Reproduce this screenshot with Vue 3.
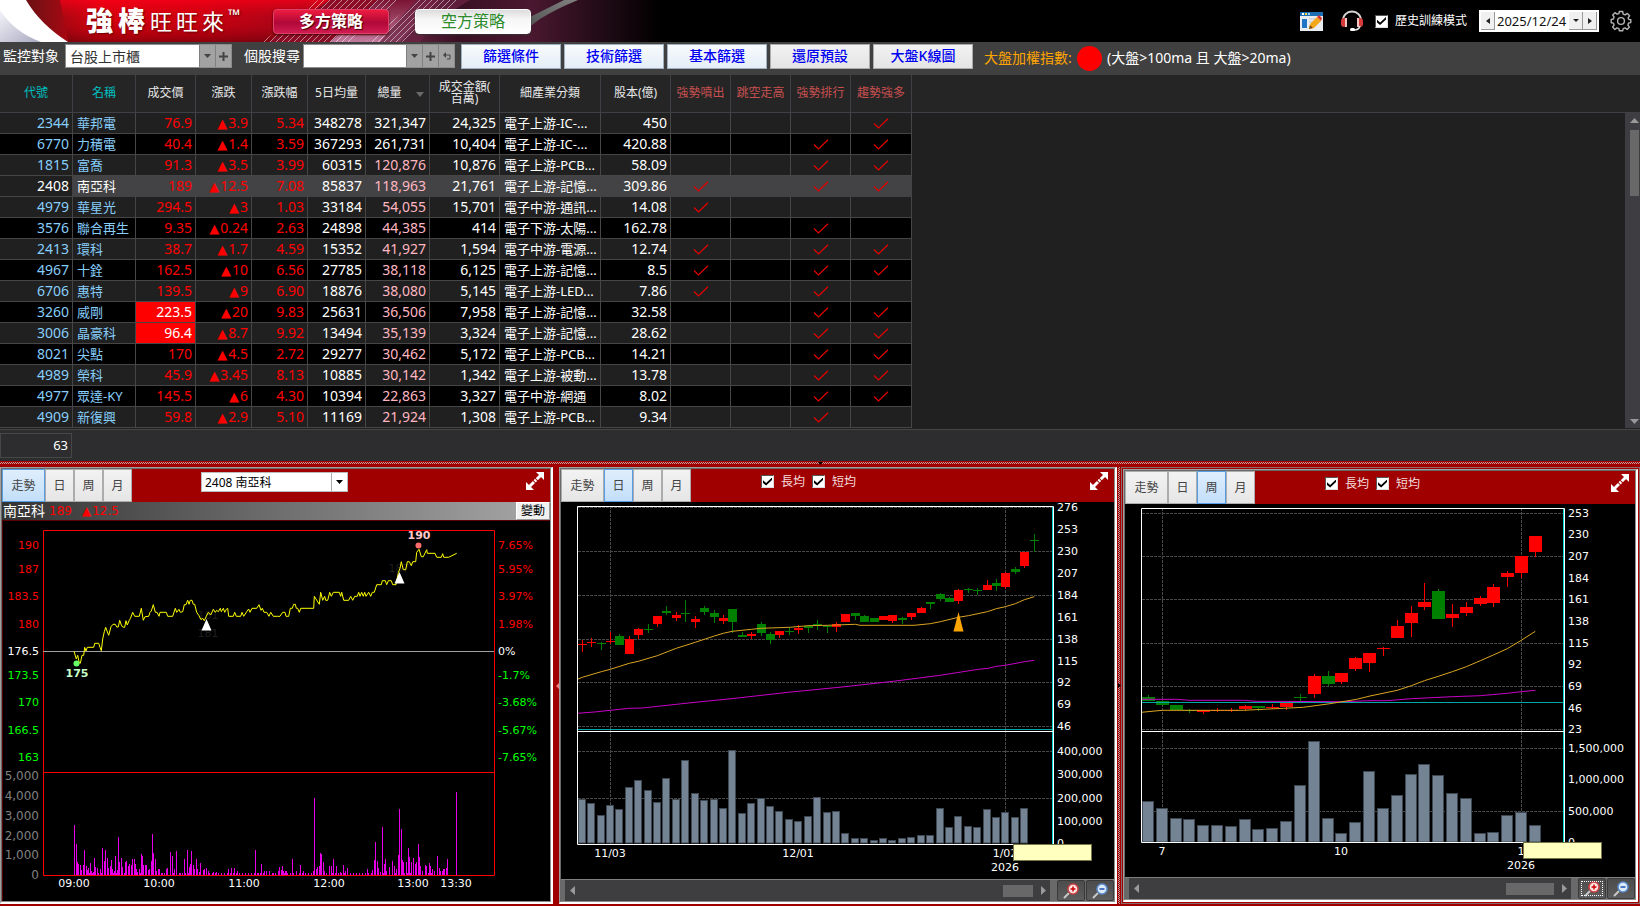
<script setup>
import { ref } from 'vue'

const columns = [
  { label: '代號', width: 73, tone: 'teal' },
  { label: '名稱', width: 63, tone: 'teal' },
  { label: '成交價', width: 60 },
  { label: '漲跌', width: 56 },
  { label: '漲跌幅', width: 56 },
  { label: '5日均量', width: 58 },
  { label: '總量', width: 64, sorted: true },
  { label: '成交金額( 百萬)', width: 70 },
  { label: '細產業分類', width: 101 },
  { label: '股本(億)', width: 70 },
  { label: '強勢噴出', width: 60, tone: 'rose' },
  { label: '跳空走高', width: 60, tone: 'rose' },
  { label: '強勢排行', width: 60, tone: 'rose' },
  { label: '趨勢強多', width: 61, tone: 'rose' },
]

// code, name, price, change, percent, 5-day volume, volume, amount, industry, capital, signals
const stocks = [
  ['2344', '華邦電', '76.9', '3.9', '5.34', '348278', '321,347', '24,325', '電子上游-IC-...', '450', '0001'],
  ['6770', '力積電', '40.4', '1.4', '3.59', '367293', '261,731', '10,404', '電子上游-IC-...', '420.88', '0011'],
  ['1815', '富喬', '91.3', '3.5', '3.99', '60315', '120,876', '10,876', '電子上游-PCB...', '58.09', '0011'],
  ['2408', '南亞科', '189', '12.5', '7.08', '85837', '118,963', '21,761', '電子上游-記憶...', '309.86', '1011'],
  ['4979', '華星光', '294.5', '3', '1.03', '33184', '54,055', '15,701', '電子中游-通訊...', '14.08', '1000'],
  ['3576', '聯合再生', '9.35', '0.24', '2.63', '24898', '44,385', '414', '電子下游-太陽...', '162.78', '0010'],
  ['2413', '環科', '38.7', '1.7', '4.59', '15352', '41,927', '1,594', '電子中游-電源...', '12.74', '1011'],
  ['4967', '十銓', '162.5', '10', '6.56', '27785', '38,118', '6,125', '電子上游-記憶...', '8.5', '1011'],
  ['6706', '惠特', '139.5', '9', '6.90', '18876', '38,080', '5,145', '電子上游-LED...', '7.86', '1010'],
  ['3260', '威剛', '223.5', '20', '9.83', '25631', '36,506', '7,958', '電子上游-記憶...', '32.58', '0011'],
  ['3006', '晶豪科', '96.4', '8.7', '9.92', '13494', '35,139', '3,324', '電子上游-記憶...', '28.62', '0011'],
  ['8021', '尖點', '170', '4.5', '2.72', '29277', '30,462', '5,172', '電子上游-PCB...', '14.21', '0011'],
  ['4989', '榮科', '45.9', '3.45', '8.13', '10885', '30,142', '1,342', '電子上游-被動...', '13.78', '0011'],
  ['4977', '眾達-KY', '145.5', '6', '4.30', '10394', '22,863', '3,327', '電子中游-網通', '8.02', '0011'],
  ['4909', '新復興', '59.8', '2.9', '5.10', '11169', '21,924', '1,308', '電子上游-PCB...', '9.34', '0010'],
]
const selected = ref('2408')
const limitUp = ['3260', '3006']

const tools = ['篩選條件', '技術篩選', '基本篩選', '還原預設', '大盤K線圖']
const tabs = ['走勢', '日', '周', '月']
const history = ref(true)

// Chart data is stored on a grid of three units per pixel.
const UNIT = 3
const cell = (n) => Math.floor(n / UNIT)
const nums = (text) => text.trim().split(/\s*;\s*/).map((r) => r.split(/[\s,]+/).map(Number))
const shift = (rows, dx) => rows.map(([x, ...rest]) => [x + dx, ...rest])
const line = (rows) => rows.map(([x, y]) => `${(x / UNIT).toFixed(1)},${(y / UNIT).toFixed(1)}`).join(' ')

/* ---- intraday ---- */
const tickLine = line([
  ...nums('222 589;229 612;233 601;238 624;241 625;246 601;251 601;254 577;258 588;262 577;281 577;284 565;296 565;300 577;304 587;308 552;313 530;317 517;321 528;326 541;333 515;339 508;346 508;350 516;355 516;359 496;364 510;368 516;374 517;378 497;382 510;387 497;391 491;398 472;404 484;418 484;424 460;430 496;435 485;446 484;450 472;454 468;460 449;466 472;471 472;477 484;480 472;499 472;503 484;518 484;526 460;530 472;537 463;541 472;548 470;553 449;558 449;563 436;567 448;571 436;576 436;580 448;584 448;590 472;597 482;603 494;608 490;613 497;619 484;625 472;632 480;640 463;646 472;650 466;655 470;661 460;664 470;670 460;674 472;679 463;683 460;686 484;700 484;704 472;709 484;722 484;726 472;731 484;740 470;746 462;750 472;756 460;770 460;777 449;783 466;787 460;792 472;800 472;807 484;812 472;820 484;832 484'),
  ...shift(nums('0 484;8 472;15 472;18 484;26 484;31 460;37 460;41 448;46 448;49 460;53 460;58 472;62 460;101 460;103 424;118 448;122 412;128 436;134 424;137 436;143 436;149 412;154 424;160 412;178 412;182 424;185 412;191 436;206 436;212 424;218 436;224 424;232 424;236 412;240 424;245 412;250 424;254 412;258 424;266 412;272 424;277 412;283 412;290 389;304 389;307 377;316 377;320 389;325 377;334 377;338 389;348 389;355 353;360 340;364 320;370 344;377 344;382 320;388 320;394 332;398 320;407 320;410 292;417 283;424 305;430 305;440 284;442 295;465 295;470 307;484 307;488 296;491 307;506 307;530 295'), 840),
])
const tickVolumes = [
  ...nums('223 1110;229 1168;232 1222;236 1228;241 1231;244 1246;250 1231;253 1186;259 1234;262 1246;265 1240;271 1225;274 1249;280 1252;283 1210;286 1237;292 1240;295 1255;301 1243;307 1180;313 1219;316 1186;322 1210;325 1240;331 1234;334 1216;337 1243;343 1249;346 1204;352 1246;355 1147;358 1222;364 1210;367 1237;373 1255;376 1222;379 1219;385 1234;388 1228;394 1231;397 1213;403 1213;406 1228;409 1244;412 1252;418 1243;424 1198;427 1204;430 1231;436 1231;439 1231;445 1246;448 1243;454 1219;457 1138;460 1195;466 1213;469 1249;475 1243;478 1243;487 1255;493 1255;499 1243;502 1240;511 1192;517 1204;523 1243;529 1189;541 1255;553 1213;562 1186;568 1237;571 1228;574 1189;580 1231;583 1243;589 1213;592 1243;598 1252;601 1225;610 1246;613 1243;619 1240;625 1250;640 1252;649 1252;685 1243;694 1240;703 1240;712 1250;766 1186;775 1255;784 1228;793 1250;799 1249;808 1249;820 1254;835 1250;838 1237;844 1246;847 1234;850 1249;859 1249;877 1213;890 1252'),
  ...shift(nums('4 1246;7 1234;16 1249;37 1213;50 1250;61 1231;69 1248;100 1250;103 1030;109 1243;112 1237;118 1234;121 1195;124 1198;130 1222;133 1249;148 1234;154 1234;160 1213;169 1234;181 1252;190 1231;196 1249;202 1240;211 1254;262 1243;277 1246;283 1216;286 1162;292 1219;295 1240;301 1252;307 1117;313 1228;316 1213;319 1249;328 1237;337 1219;343 1234;349 1243;355 1201;358 1063;364 1123;367 1216;370 1222;379 1222;385 1180;388 1207;394 1222;400 1210;406 1228;409 1222;415 1168;418 1207;421 1234;427 1248;436 1231;439 1234;448 1225;451 1234;457 1243;463 1250;472 1204;478 1240;481 1249;487 1249;490 1243;493 1243;499 1240;502 1213;529 1012'), 840),
  ...Array.from({ length: 143 }, (_, i) => [223 + i * 9, 1255]).filter(([x]) => x < 1345),
].map(([x, y]) => ({ x: cell(x), y: cell(y), h: 420 - cell(y) }))

const priceTicks = [
  ['190', '7.65%', 271, 'up'], ['187', '5.95%', 343, 'up'], ['183.5', '3.97%', 424, 'up'], ['180', '1.98%', 508, 'up'],
  ['176.5', '0%', 589, 'flat'],
  ['173.5', '-1.7%', 661, 'down'], ['170', '-3.68%', 742, 'down'], ['166.5', '-5.67%', 826, 'down'], ['163', '-7.65%', 907, 'down'],
].map(([price, pct, y, tone]) => ({ price, pct, y: cell(y), tone }))
const volumeTicks = [['5,000', 963], ['4,000', 1023], ['3,000', 1083], ['2,000', 1142], ['1,000', 1200], ['0', 1259]]
const timeTicks = [['09:00', 74], ['10:00', 159], ['11:00', 244], ['12:00', 329], ['13:00', 413], ['13:30', 456]]

/* ---- candles: x, high, top, bottom, low, rising ---- */
function buildChart(o) {
  return {
    ...o,
    candles: o.candles.map(([x, hi, top, bot, lo, up]) => ({
      x: cell(x), hi: cell(hi), h: cell(lo) - cell(hi), top: cell(top), bh: Math.max(1, cell(bot) - cell(top)), fill: up ? '#ff0000' : '#008000',
    })),
    bars: o.volumes.map(([x, y]) => ({ x: cell(x), y: cell(y), h: o.base - cell(y) })),
  }
}

const daily = buildChart({
  key: 'daily', active: '日', box: '6 47 553 377', left: 22, right: 499, top: 51, split: 276, teal: 274, base: 388, frameBottom: 389,
  half: 4, body: 9, barWidth: 8,
  grid: [157, 289, 421, 553, 682, 814, 889, 1030].map(cell), vert: [55, 450],
  labelX: 502,
  labels: [['276', 157], ['253', 223], ['230', 289], ['207', 355], ['184', 421], ['161', 487], ['138', 553], ['115', 619], ['92', 682], ['69', 748], ['46', 814], ['400,000', 889], ['300,000', 958], ['200,000', 1030], ['100,000', 1099], ['0', 1166]],
  dates: [['11/03', 55, 398], ['12/01', 243, 398], ['1/02', 450, 398], ['2026', 450, 412]],
  tip: { x: 458, y: 389, w: 79, h: 17 },
  candles: nums('82 555 567 570 591 1;109 549 561 564 576 1;139 561 564 567 585 0;166 531 558 561 567 1;193 537 543 570 570 0;223 543 552 598 598 1;250 519 522 540 552 1;280 507 522 525 534 0;307 483 483 507 516 1;334 453 468 474 480 0;364 471 480 489 498 1;391 435 474 477 501 0;421 483 492 501 519 1;448 453 459 471 480 0;478 465 474 486 504 0;505 480 489 498 507 1;532 462 462 501 534 0;562 531 540 546 546 0;589 531 537 543 552 1;619 501 507 534 543 0;646 532 537 555 567 0;673 528 528 540 549 1;703 516 528 531 540 0;730 510 519 525 537 1;760 510 513 519 534 0;787 495 508 511 525 0;817 510 513 516 534 0;844 501 508 516 531 1;871 477 477 501 501 1;901 474 474 483 495 0;928 480 483 501 501 0;958 489 489 501 501 0;985 483 483 495 495 1;1012 480 480 498 504 1;1042 486 489 495 507 0;1069 474 474 486 495 1;1099 456 459 474 474 1;1126 441 441 447 462 0;1156 414 417 432 438 0;1183 426 429 441 441 0;1210 402 405 438 447 1;1240 399 402 405 414 0;1267 399 405 408 420 0;1297 375 390 405 405 1;1324 372 384 393 408 0;1351 351 354 396 402 1;1381 336 342 351 357 0;1408 291 291 333 339 1;1438 237 255 258 291 0'),
  volumes: nums('82 1033;109 1045;139 1081;166 1051;193 1063;223 997;250 976;280 1006;307 1042;334 970;364 1033;391 916;421 1015;448 1036;478 1033;505 1060;532 886;562 1075;589 1045;619 1030;646 1054;673 1069;703 1093;730 1099;760 1084;787 1027;817 1072;844 1069;871 1135;901 1150;928 1150;958 1156;985 1150;1012 1156;1042 1150;1069 1147;1099 1141;1126 1141;1156 1060;1183 1117;1210 1084;1240 1114;1267 1117;1297 1063;1324 1087;1351 1072;1381 1087;1408 1060'),
  short: line(nums('67 673;82 667;139 650;166 643;223 625;250 619;307 602;364 580;421 562;478 543;505 535;532 529;590 523;619 520;703 517;760 512;817 511;901 508;915 511;1077 511;1126 506;1156 500;1210 487;1240 482;1297 470;1324 461;1351 455;1381 446;1408 434;1438 425')),
  long: line(nums('67 775;118 771;223 760;262 759;400 744;540 730;700 712;870 695;1015 679;1156 661;1270 643;1300 640;1324 634;1351 631;1408 620;1438 616')),
})

const weekly = buildChart({
  key: 'weekly', active: '周', box: '15 49 510 373', left: 31, right: 455, top: 53, split: 276, teal: 247, base: 387, frameBottom: 387,
  half: 6, body: 13, barWidth: 12,
  grid: [175, 304, 433, 565, 694, 823, 880, 1069].map(cell), vert: [52, 411],
  labelX: 458,
  labels: [['253', 175], ['230', 238], ['207', 304], ['184', 370], ['161', 433], ['138', 499], ['115', 565], ['92', 628], ['69', 694], ['46', 760], ['23', 823], ['1,500,000', 880], ['1,000,000', 973], ['500,000', 1069], ['0', 1161]],
  dates: [['7', 52, 396], ['10', 231, 396], ['1', 411, 396], ['2026', 411, 410]],
  tip: { x: 413, y: 387, w: 79, h: 17 },
  candles: nums('115 720 726 738 738 0;157 738 738 750 750 0;199 750 750 765 765 0;238 762 766 770 774 0;280 765 766 771 777 1;322 759 765 767 771 1;364 759 765 767 771 1;406 750 753 762 768 1;445 753 753 759 768 0;487 747 756 759 762 1;529 741 741 756 765 1;571 717 726 729 738 0;613 657 663 717 729 1;655 648 663 687 693 0;694 654 654 682 687 1;736 606 609 642 648 1;778 594 594 624 651 1;820 576 581 584 603 1;862 495 513 549 549 1;904 453 474 504 546 1;943 384 441 456 465 1;985 402 408 492 492 0;1027 447 477 489 516 1;1069 441 456 474 483 1;1111 423 429 447 453 1;1150 387 396 444 456 1;1192 348 354 366 396 1;1234 303 303 354 369 1;1276 243 243 291 306 1'),
  volumes: nums('115 1039;157 1060;199 1090;238 1093;280 1111;322 1111;364 1114;406 1093;445 1123;487 1120;529 1099;571 991;613 859;655 1090;694 1135;736 1102;778 949;820 1060;862 1021;904 958;943 928;985 961;1027 1015;1069 1030;1111 1135;1150 1132;1192 1081;1234 1072;1276 1111'),
  short: line(nums('94 772;157 766;400 766;520 760;580 757;660 746;740 733;780 723;862 706;904 692;943 677;985 664;1027 650;1069 635;1111 617;1150 600;1192 581;1234 556;1276 529')),
  long: line(nums('94 733;199 733;238 736;400 736;440 739;700 740;780 737;830 737;904 731;1027 725;1111 722;1192 715;1234 710;1276 706')),
})
const charts = [daily, weekly]
</script>

<template>
  <div class="app">
    <header class="top">
      <svg class="art" width="660" height="42" viewBox="0 0 660 42" aria-hidden="true">
        <defs>
          <linearGradient id="gRed" x1="0" x2="1" y1="0" y2="0">
            <stop offset="0" stop-color="#4a0d12" /><stop offset="0.12" stop-color="#7d0f14" /><stop offset="0.3" stop-color="#d8000f" />
            <stop offset="0.62" stop-color="#c60010" /><stop offset="1" stop-color="#8e0a20" />
          </linearGradient>
          <linearGradient id="gShade" x1="0" x2="0" y1="0" y2="1">
            <stop offset="0" stop-color="#ff0018" stop-opacity="0.7" /><stop offset="0.45" stop-color="#e00010" stop-opacity="0.15" />
            <stop offset="1" stop-color="#500008" stop-opacity="0.5" />
          </linearGradient>
          <linearGradient id="gPink" x1="0" x2="0" y1="0" y2="1">
            <stop offset="0" stop-color="#7a1434" /><stop offset="1" stop-color="#c27a9c" />
          </linearGradient>
          <linearGradient id="gWine" x1="0" x2="1" y1="0" y2="0">
            <stop offset="0" stop-color="#7a3050" /><stop offset="0.3" stop-color="#3a1024" /><stop offset="0.55" stop-color="#4a1830" /><stop offset="1" stop-color="#000" />
          </linearGradient>
          <linearGradient id="gSilver" x1="0" x2="1" y1="1" y2="0">
            <stop offset="0" stop-color="#444" /><stop offset="1" stop-color="#808080" />
          </linearGradient>
          <linearGradient id="gLav" x1="0" x2="1" y1="0" y2="1">
            <stop offset="0" stop-color="#f4f4fa" /><stop offset="1" stop-color="#a9a9c0" />
          </linearGradient>
          <pattern id="hatch" width="6" height="6" patternUnits="userSpaceOnUse">
            <path d="M-1 7 L7 -1 M-1 1 L1 -1 M5 7 L7 5" stroke="#fff" stroke-opacity="0.5" stroke-width="1" />
          </pattern>
        </defs>
        <rect width="660" height="42" fill="#000" />
        <path d="M372 42 L414 0 H660 V42 Z" fill="url(#gWine)" />
        <path d="M0 0 H330 L268 42 H0 Z" fill="url(#gRed)" />
        <path d="M60 0 H330 L268 42 H68 Z" fill="url(#gShade)" />
        <path d="M330 0 H378 L330 42 H268 Z" fill="#8c0c26" />
        <path d="M378 0 H440 L400 42 H330 Z" fill="url(#gPink)" />
        <path d="M416 0 H470 Q436 20 420 42 H380 Z" fill="#6b2343" fill-opacity="0.75" />
        <path d="M318 0 H400 L350 42 H262 Z" fill="url(#hatch)" />
        <path d="M418 0 H460 L402 42 H366 Z" fill="url(#hatch)" />
        <path d="M508 28 Q540 12 564 0 H578 Q556 9 540 19 L520 34 Z" fill="url(#gSilver)" />
        <path d="M0 0 H26 Q40 24 68 42 H0 Z" fill="#fff" />
        <path d="M0 10 Q14 32 41 42 H0 Z" fill="url(#gLav)" />
      </svg>
      <div class="top-row">
        <h1 class="logo"><b>強</b><b>棒</b><span>旺</span><span>旺</span><span>來</span><sup>™</sup></h1>
        <button type="button" class="mode long">多方策略</button>
        <button type="button" class="mode short">空方策略</button>
        <div class="top-right">
          <button type="button" class="icon-btn note" aria-label="筆記">
            <svg width="23" height="19" viewBox="0 0 23 19">
              <rect width="23" height="19" fill="#e9edf2" /><rect width="23" height="4" fill="#1d6fb5" />
              <rect x="2" y="1" width="2" height="2" fill="#fff" /><rect x="5" y="1" width="2" height="2" fill="#ffd24a" /><rect x="8" y="1" width="2" height="2" fill="#9fd0ff" />
              <rect x="2" y="7" width="5" height="9" fill="#1f76c4" /><path d="M9 7 H16 M9 10 H13" stroke="#b9c3cc" />
              <path d="M9 17 L10 12 L17 5 L21 9 L14 16 Z" fill="#f6a81c" /><path d="M17 5 L19 3 L22 6 L21 9 Z" fill="#d8362a" /><path d="M9 17 L10 13 L13 16 Z" fill="#7b4a12" />
            </svg>
          </button>
          <button type="button" class="icon-btn phone" aria-label="客服">
            <svg width="24" height="22" viewBox="0 0 24 22">
              <path d="M3 12 C2 -2 22 -2 21 12" fill="none" stroke="#d8d8d8" stroke-width="2" />
              <rect x="1" y="8" width="6" height="9" rx="3" fill="#d63a3a" /><rect x="17" y="8" width="6" height="9" rx="3" fill="#d63a3a" />
              <rect x="5" y="8" width="2" height="9" fill="#f3c4c4" /><rect x="17" y="8" width="2" height="9" fill="#f3c4c4" />
              <path d="M20 16 Q19 20 14 20" fill="none" stroke="#e8e8e8" stroke-width="1.5" /><rect x="10" y="18" width="5" height="3" rx="1.5" fill="#fff" />
            </svg>
          </button>
          <label class="tick history"><input v-model="history" type="checkbox" /><span>歷史訓練模式</span></label>
          <div class="date">
            <button type="button" aria-label="前一日"><svg width="4" height="6" viewBox="0 0 4 6"><path d="M4 0 V6 L0 3 Z" fill="#222" /></svg></button>
            <input type="text" value="2025/12/24" aria-label="日期" />
            <button type="button" aria-label="選擇日期"><svg width="6" height="4" viewBox="0 0 6 4"><path d="M0 0 H6 L3 3 Z" fill="#222" /></svg></button>
            <button type="button" aria-label="後一日"><svg width="4" height="6" viewBox="0 0 4 6"><path d="M0 0 V6 L4 3 Z" fill="#222" /></svg></button>
          </div>
          <button type="button" class="icon-btn gear" aria-label="設定">
            <svg width="22" height="22" viewBox="0 0 22 22" fill="none" stroke="#b4b4b4" stroke-width="1.4" stroke-linejoin="round">
              <path d="M9.3 1.5 H12.7 L13.2 4.1 L15.1 4.9 L17.3 3.4 L19.6 5.7 L18.1 7.9 L18.9 9.5 L20.8 9.6 V12.6 L18.6 13 L17.9 15 L19.4 17.1 L17.2 19.4 L15 17.9 L13.2 18.7 L12.7 20.8 H9.4 L8.9 18.7 L7 17.9 L4.9 19.4 L2.6 17.1 L4.1 15 L3.3 13.1 L1.2 12.7 V9.5 L3.4 9 L4.1 7.1 L2.7 5 L5 2.7 L7.1 4.1 L8.9 3.6 Z" />
              <circle cx="11" cy="11" r="3.4" />
            </svg>
          </button>
        </div>
      </div>
    </header>

    <div class="toolbar">
      <label for="scope" class="tl">監控對象</label>
      <div class="combo scope">
        <select id="scope"><option>台股上市櫃</option></select>
        <button type="button" aria-label="展開"><svg width="7" height="4" viewBox="0 0 7 4"><path d="M0 0 H7 L3.5 4 Z" fill="#444" /></svg></button>
        <button type="button" aria-label="新增"><svg width="9" height="9" viewBox="0 0 9 9"><path d="M4.5 0 V9 M0 4.5 H9" stroke="#444" stroke-width="2" /></svg></button>
      </div>
      <label for="find" class="tl second">個股搜尋</label>
      <div class="combo find">
        <input id="find" type="text" />
        <button type="button" aria-label="展開"><svg width="7" height="4" viewBox="0 0 7 4"><path d="M0 0 H7 L3.5 4 Z" fill="#444" /></svg></button>
        <button type="button" aria-label="加入"><svg width="9" height="9" viewBox="0 0 9 9"><path d="M4.5 0 V9 M0 4.5 H9" stroke="#444" stroke-width="2" /></svg></button>
        <button type="button" aria-label="返回"><svg width="8" height="8" viewBox="0 0 8 8"><path d="M0 3 L3 0 V6 Z" fill="#444" /><path d="M3 3 H7 V7 H4" fill="none" stroke="#444" /></svg></button>
      </div>
      <div class="tools">
        <button v-for="(t, i) in tools" :key="t" type="button" :class="{ plain: i > 2 }">{{ t }}</button>
      </div>
      <span class="index-label">大盤加權指數:</span>
      <span class="lamp"></span>
      <span class="rule">(大盤&gt;100ma 且 大盤&gt;20ma)</span>
    </div>

    <section class="grid">
      <table>
        <colgroup><col v-for="c in columns" :key="c.label" :style="{ width: c.width + 'px' }" /></colgroup>
        <thead>
          <tr>
            <th v-for="c in columns" :key="c.label" :class="[c.tone, { sorted: c.sorted }]" scope="col">
              <span>{{ c.label }}</span>
              <svg v-if="c.sorted" width="8" height="5" viewBox="0 0 8 5"><path d="M0 0 H8 L4 5 Z" fill="#6a6a6a" /></svg>
            </th>
          </tr>
        </thead>
        <tbody>
          <tr v-for="(s, r) in stocks" :key="s[0]" :class="{ on: s[0] === selected }" @click="selected = s[0]">
            <td class="code num">{{ s[0] }}</td>
            <td class="name">{{ s[1] }}</td>
            <td class="num red" :class="{ limit: limitUp.includes(s[0]) }">{{ s[2] }}</td>
            <td class="num red"><i>▲</i>{{ s[3] }}</td>
            <td class="num red">{{ s[4] }}</td>
            <td class="num">{{ s[5] }}</td>
            <td class="num" :class="{ pink: r > 1 }">{{ s[6] }}</td>
            <td class="num">{{ s[7] }}</td>
            <td class="kind">{{ s[8] }}</td>
            <td class="num">{{ s[9] }}</td>
            <td v-for="(f, k) in s[10].split('')" :key="k" class="flag">
              <svg v-if="f === '1'" width="16" height="11" viewBox="0 0 16 11"><path d="M1 5.5 L5.5 10 L15 0.8" fill="none" stroke="#e60000" stroke-width="1.2" /></svg>
            </td>
          </tr>
        </tbody>
      </table>
      <div class="side">
        <div class="side-head"></div>
        <div class="vbar">
          <svg width="9" height="5" viewBox="0 0 9 5"><path d="M0 5 H9 L4.5 0 Z" fill="#999" /></svg>
          <div class="vtrack"><div class="vthumb"></div></div>
          <svg width="9" height="5" viewBox="0 0 9 5"><path d="M0 0 H9 L4.5 5 Z" fill="#999" /></svg>
        </div>
      </div>
    </section>

    <div class="foot"><output>63</output></div>

    <div class="split-h"><svg width="5" height="3" viewBox="0 0 5 3"><path d="M0 0 H5 L2.5 3 Z" fill="#000" /></svg></div>

    <main class="panels">
      <section class="panel">
        <div class="inner">
          <div class="bar">
            <div class="tabs"><button v-for="t in tabs" :key="t" type="button" :class="{ active: t === '走勢' }">{{ t }}</button></div>
            <div class="picker">
              <select aria-label="個股"><option>2408 南亞科</option></select>
              <span><svg width="7" height="4" viewBox="0 0 7 4"><path d="M0 0 H7 L3.5 4 Z" fill="#000" /></svg></span>
            </div>
            <button type="button" class="expand" aria-label="放大">
              <svg width="18" height="18" viewBox="0 0 18 18"><path d="M10 0 H18 V8 Z M8 18 H0 V10 Z" fill="#fff" /><path d="M3 15 L15 3" stroke="#fff" stroke-width="3" stroke-dasharray="7 1 2 1 7" /></svg>
            </button>
          </div>
          <div class="quote">
            <span class="q-name">南亞科</span><span class="q-num">189</span><span class="q-num"><i>▲</i>12.5</span>
            <button type="button">變動</button>
          </div>
          <svg class="chart" viewBox="2 65 548 381" role="img" aria-label="走勢圖">
            <rect x="2" y="65" width="548" height="381" fill="#000" />
            <path d="M2.5 446 V65.5 H550" fill="none" stroke="#5a0000" />
            <path d="M43.5 75.5 H494.5 V420.5 H43.5 Z M43.5 317.5 H494.5" fill="none" stroke="#ff0000" />
            <path d="M43 196.5 H494" stroke="#a0a0a0" />
            <text x="208" y="164" class="ghost">181</text>
            <text x="208" y="182" class="ghost">181</text>
            <text x="399" y="117" class="ghost">187</text>
            <rect v-for="(v, i) in tickVolumes" :key="i" :x="v.x" :y="v.y" width="1" :height="v.h" fill="#e600e6" />
            <polyline :points="tickLine" fill="none" stroke="#ffff00" stroke-width="1" />
            <path d="M206.5 164 L211.5 175.5 H201.5 Z M399.5 117 L404.5 128.5 H394.5 Z" fill="#fff" />
            <circle cx="76.5" cy="208.5" r="3" fill="#66ff66" /><circle cx="418.5" cy="90.5" r="3" fill="#ff6b6b" />
            <text x="77" y="222" class="mark low">175</text><text x="419" y="84" class="mark high">190</text>
            <g v-for="t in priceTicks" :key="t.price" :class="t.tone">
              <text x="39" :y="t.y + 4" text-anchor="end">{{ t.price }}</text>
              <text x="498" :y="t.y + 4">{{ t.pct }}</text>
            </g>
            <text v-for="v in volumeTicks" :key="v[0]" x="39" :y="Math.round(v[1] / 3) + 4" text-anchor="end" class="vol">{{ v[0] }}</text>
            <text v-for="t in timeTicks" :key="t[0]" :x="t[1]" y="432" text-anchor="middle" class="flat">{{ t[0] }}</text>
          </svg>
        </div>
      </section>

      <div class="split-v plain"><svg width="3" height="6" viewBox="0 0 3 6"><path d="M3 0 V6 L0 3 Z" fill="#f08080" /></svg></div>

      <template v-for="c in charts" :key="c.key">
        <div v-if="c.key === 'weekly'" class="split-v dots"><svg width="3" height="5" viewBox="0 0 3 5"><path d="M0 0 V5 L3 2.5 Z" fill="#000" /></svg></div>
        <div :class="{ frame: c.key === 'weekly' }">
          <section class="panel">
            <div class="inner">
              <div class="bar">
                <div class="tabs"><button v-for="t in tabs" :key="t" type="button" :class="{ active: t === c.active }">{{ t }}</button></div>
                <div class="ticks">
                  <label class="tick"><input type="checkbox" checked /><span>長均</span></label>
                  <label class="tick"><input type="checkbox" checked /><span>短均</span></label>
                </div>
                <button type="button" class="expand" aria-label="放大">
                  <svg width="18" height="18" viewBox="0 0 18 18"><path d="M10 0 H18 V8 Z M8 18 H0 V10 Z" fill="#fff" /><path d="M3 15 L15 3" stroke="#fff" stroke-width="3" stroke-dasharray="7 1 2 1 7" /></svg>
                </button>
              </div>
              <svg class="chart" :viewBox="c.box" role="img" aria-label="K線圖">
                <rect x="0" y="40" width="570" height="400" fill="#000" />
                <path v-for="y in c.grid" :key="y" :d="`M${c.left + 1} ${y + 0.5} H${c.right - 1}`" stroke="#484848" stroke-dasharray="3 1" />
                <path v-for="x in c.vert" :key="x" :d="`M${x + 0.5} ${c.top} V${c.base + 3}`" stroke="#484848" stroke-dasharray="3 1" />
                <rect v-for="(b, i) in c.bars" :key="i" :x="b.x - c.half + 0.5" :y="b.y + 0.5" :width="c.barWidth - 1" :height="b.h - 0.5" fill="#748494" stroke="#3e4853" />
                <g v-for="(k, i) in c.candles" :key="'k' + i" :fill="k.fill">
                  <rect :x="k.x" :y="k.hi" width="1" :height="k.h" />
                  <rect :x="k.x - c.half" :y="k.top" :width="c.body" :height="k.bh" />
                </g>
                <path :d="`M${c.left} ${c.teal + 0.5} H${c.right}`" stroke="#00a8a8" />
                <polyline :points="c.long" fill="none" stroke="#c800c8" />
                <polyline :points="c.short" fill="none" stroke="#daa520" />
                <polygon v-if="c.key === 'daily'" points="403.5,157 408.5,176.5 398.5,176.5" fill="#ffa500" />
                <path :d="`M${c.right - 1.5} ${c.top + 1} V${c.frameBottom}`" stroke="#00d8d8" />
                <path :d="`M${c.left + 0.5} ${c.top + 0.5} H${c.right - 0.5} V${c.frameBottom + 0.5} H${c.left + 0.5} Z M${c.left} ${c.split + 0.5} H${c.right}`" fill="none" stroke="#fff" />
                <text v-for="l in c.labels" :key="l[0]" :x="c.labelX" :y="Math.floor(l[1] / 3) + 4" class="flat">{{ l[0] }}</text>
                <rect :x="c.labelX - 2" :y="c.tip.y + 1" width="50" height="8" fill="#000" />
                <text v-for="d in c.dates" :key="d[0]" :x="d[1]" :y="d[2] + 4" text-anchor="middle" class="flat">{{ d[0] }}</text>
                <rect :x="c.tip.x + 0.5" :y="c.tip.y + 0.5" :width="c.tip.w - 1" :height="c.tip.h - 1" fill="#ffffc0" stroke="#77774a" />
              </svg>
              <div class="zoom">
                <div class="hbar">
                  <svg width="5" height="9" viewBox="0 0 5 9"><path d="M5 0 V9 L0 4.5 Z" fill="#999" /></svg>
                  <div class="hthumb" :class="c.key"></div>
                  <svg width="5" height="9" viewBox="0 0 5 9"><path d="M0 0 V9 L5 4.5 Z" fill="#999" /></svg>
                </div>
                <button type="button" :class="{ focus: c.key === 'weekly' }" aria-label="放大">
                  <svg width="16" height="16" viewBox="0 0 16 16"><path d="M1 15 L6 10" stroke="#c8c8c8" stroke-width="2" /><circle cx="10" cy="6" r="5" fill="#fbe4e4" stroke="#d04040" stroke-width="1.5" /><path d="M7.5 6 H12.5 M10 3.5 V8.5" stroke="#d00000" stroke-width="1.5" /></svg>
                </button>
                <button type="button" aria-label="縮小">
                  <svg width="16" height="16" viewBox="0 0 16 16"><path d="M1 15 L6 10" stroke="#c8c8c8" stroke-width="2" /><circle cx="10" cy="6" r="5" fill="#dceafa" stroke="#5a8ccc" stroke-width="1.5" /><path d="M7.5 6 H12.5" stroke="#1c50b0" stroke-width="1.5" /></svg>
                </button>
              </div>
            </div>
          </section>
        </div>
      </template>
    </main>
  </div>
</template>

<style>
body { background: #a00000; }
</style>

<style scoped>
.app, .app * { box-sizing: border-box; }
.app {
  font-family: "Noto Sans", "Noto Sans CJK TC", sans-serif;
  font-size: 14px;
  color: #fff;
  background: #a00000;
}
button, input, select { font: inherit; margin: 0; padding: 0; border-radius: 0; }
button { cursor: pointer; display: flex; align-items: center; justify-content: center; border: 0; background: none; color: inherit; }
svg { display: block; flex: none; }
i { font-style: normal; font-family: "DejaVu Sans", sans-serif; line-height: 1; margin-right: 1px; }

.top { position: relative; height: 42px; background: #000; overflow: hidden; }
.art { position: absolute; left: 0; top: 0; }
.top-row { position: relative; display: flex; align-items: center; height: 42px; }
.logo { display: flex; align-items: center; margin: 0; padding-left: 86px; width: 273px; font-size: 22px; font-weight: 400; line-height: 32px; text-shadow: 1px 1px 2px #600; }
.logo b { font-size: 27px; font-weight: 900; width: 32px; }
.logo span { width: 26px; }
.logo sup { font-size: 16px; line-height: 20px; align-self: flex-start; }
.mode { width: 116px; height: 25px; border-radius: 4px; font-size: 16px; line-height: 24px; }
.mode.long { font-weight: 700; border: 1px solid #e0406c; background: linear-gradient(#ee1c40, #b00838 55%, #d01c50); text-shadow: 1px 1px 1px #400; box-shadow: 0 1px 2px #400; }
.mode.short { margin-left: 26px; color: #2c8c2c; border: 1px solid #fff; background: linear-gradient(#dcdcdc, #f6f6f6 40%, #fff); box-shadow: 0 1px 2px #333; }
.top-right { margin-left: auto; display: flex; align-items: center; padding-right: 8px; }
.icon-btn.phone { margin-left: 17px; }
.tick { display: flex; align-items: center; font-size: 12px; line-height: 16px; }
.tick input { appearance: none; width: 13px; height: 13px; background: #fff; border: 1px solid #555; border-right-color: #ddd; border-bottom-color: #ddd; display: flex; align-items: center; justify-content: center; }
.tick input:checked::before { content: ""; width: 9px; height: 8px; background: #000; clip-path: polygon(0 35%, 35% 68%, 100% 0, 100% 32%, 35% 100%, 0 68%); }
.tick span { margin-left: 7px; }
.history { margin-left: 11px; }
.date { display: flex; margin-left: 12px; width: 120px; height: 22px; background: #fff; padding: 2px; color: #111; }
.date input { flex: 1; min-width: 0; border: 0; background: none; font-size: 13px; padding-left: 2px; outline: 0; color: #111; }
.date button { width: 14px; background: #f0f0f0; border-right: 1px solid #999; border-bottom: 1px solid #999; }
.gear { margin-left: 11px; }

.toolbar { display: flex; align-items: center; height: 33px; padding: 0 0 5px 3px; background: #404040; white-space: nowrap; }
.tl { width: 62px; font-size: 14px; line-height: 20px; }
.tl.second { margin-left: 12px; width: 59px; }
.combo { display: flex; height: 24px; border: 1px solid #8c8c8c; background: #a2a2a2; }
.combo.scope { width: 167px; }
.combo.find { width: 152px; }
.combo select, .combo input { flex: 1; min-width: 0; border: 0; appearance: none; background: #fff; color: #333; padding: 0 4px; outline: 0; }
.combo button { width: 16px; border-left: 1px solid #808080; }
.tools { display: flex; gap: 3px; margin-left: 6px; }
.tools button { width: 100px; height: 25px; color: #0000f0; font-weight: 500; line-height: 20px; border: 1px solid #9fb0c0; background: linear-gradient(#f8fbfe, #e4edf6); }
.tools .plain { border-color: #acacac; background: linear-gradient(#f2f2f2, #e4e4e4); }
.index-label { margin-left: 11px; width: 93px; color: #ffa500; line-height: 20px; padding-top: 4px; }
.lamp { width: 25px; height: 25px; border-radius: 50%; background: #f00; margin-top: 4px; }
.rule { margin-left: 5px; line-height: 20px; padding-top: 4px; }

.grid { display: flex; background: #202020; padding-bottom: 1px; }
table { width: 912px; flex: none; table-layout: fixed; border-collapse: separate; border-spacing: 0; }
th { height: 38px; padding: 0 4px 2px; font-size: 12px; font-weight: 400; line-height: 12px; color: #e8e8e8; background: #252526; border-right: 1px solid #3f3f46; border-bottom: 1px solid #3f3f46; }
th.teal { color: #00c0c0; }
th.rose { color: #c85050; padding: 0 0 2px; white-space: nowrap; }
th.sorted span { margin-right: 16px; }
th.sorted { position: relative; }
th.sorted svg { position: absolute; right: 5px; top: 17px; }
td { height: 21px; padding: 0 3px; line-height: 20px; border-right: 1px solid #464646; border-bottom: 1px solid #464646; white-space: nowrap; overflow: hidden; }
tbody tr { background: #202020; }
tbody tr:nth-child(even) { background: #000; }
tbody tr.on { background: #434345; }
tbody tr.on td { border-color: #434345; }
tbody tr.on .code { background: #202020; color: #fff; border-bottom-color: #464646; }
tbody tr.on .name { color: #fff; }
.num { text-align: right; }
.num i { font-size: 13px; }
.code, .name { color: #87cefa; }
.name, .kind { padding-left: 4px; font-size: 13px; }
.red { color: #ff0000; }
.limit { background: #ff0000; color: #fff; }
.pink { color: #ffb6c1; }
.flag svg { margin: 0 auto; }
.side { flex: 1; display: flex; flex-direction: column; align-items: flex-end; }
.side-head { width: 100%; height: 38px; background: #252526; border-bottom: 1px solid #3f3f46; }
.vbar { flex: 1; width: 15px; background: #3e3e42; display: flex; flex-direction: column; align-items: center; padding: 5px 0 4px 3px; }
.vtrack { flex: 1; padding: 7px 0; }
.vthumb { width: 9px; height: 66px; background: #686868; }
.foot { height: 32px; padding: 3px 0; background: #2d2d30; border-top: 1px solid #464646; }
.foot output { display: block; width: 72px; height: 25px; border: 1px solid #464646; text-align: right; padding-right: 3px; font-size: 13px; line-height: 23px; }

.split-h { height: 6px; padding-top: 1px; background: repeating-conic-gradient(#c0a0a0 0 25%, #a00000 0 50%) 0 1px / 2px 2px repeat-x, #a00000; display: flex; justify-content: center; }
.panels { display: grid; grid-template-columns: 553fr 6px 558fr 4px 519fr; align-items: start; padding-bottom: 2px; }
.panel { border: 1px solid; border-width: 1px 2px 2px 1px; border-color: #a0a0a0 #fff #fff #a0a0a0; }
.inner { border: 1px solid; border-color: #696969 #8c8c8c #8c8c8c #696969; }
.frame { border: 1px solid #8a6a6a; padding: 1px; }
.split-v { align-self: stretch; display: flex; align-items: center; justify-content: flex-end; }
.split-v.dots { background: repeating-conic-gradient(#c0a0a0 0 25%, #a00000 0 50%) 1px 0 / 2px 2px repeat-y; }

.bar { height: 33px; display: flex; background: #a00000; }
.tabs { display: flex; }
.tabs button { width: 29px; height: 33px; font-size: 12px; color: #444; border: 1px solid #acacac; background: linear-gradient(#f2f2f2, #e6e6e6); line-height: 16px; }
.tabs button:first-child { width: 43px; }
.tabs .active { border-color: #569de5; background: linear-gradient(#dfeefc, #c2defa); }
.picker { display: flex; width: 147px; height: 20px; margin: 3px 0 0 69px; background: #fff; border: 1px solid #bbb; }
.picker select { flex: 1; min-width: 0; appearance: none; border: 0; background: #fff; color: #000; padding-left: 3px; font-size: 12px; outline: 0; }
.picker span { width: 16px; border-left: 1px solid #aaa; display: flex; align-items: center; justify-content: center; }
.expand { margin: 3px 6px 0 auto; height: 18px; }
.ticks { display: flex; gap: 7px; height: 13px; margin: 6px 0 0 70px; }
.ticks span { color: #f4dede; }
.quote { display: flex; align-items: center; height: 18px; background: linear-gradient(90deg, #333, #a8a8a8); padding-left: 1px; line-height: 18px; }
.q-name { width: 46px; }
.q-num { font-family: "DejaVu Sans", sans-serif; font-size: 12px; color: #f00; margin-right: 10px; }
.quote button { margin-left: auto; width: 34px; height: 18px; background: #f0f0f0; color: #000; font-size: 12px; line-height: 16px; border: 1px solid #fff; border-right-color: #999; border-bottom-color: #999; }
.chart { width: 100%; height: auto; font-family: "DejaVu Sans", sans-serif; font-size: 11px; }
.up { fill: #ff0000; }
.down { fill: #00ff00; }
.flat { fill: #fff; }
.vol { fill: #808080; font-size: 12px; }
.ghost { fill: #1e1e1e; text-anchor: middle; }
.mark { font-weight: 700; text-anchor: middle; }
.low { fill: #c8ffc8; }
.high { fill: #ffc8c8; }
.zoom { display: flex; gap: 1px; height: 22px; background: #696969; border-top: 1px solid #808080; padding-left: 4px; }
.hbar { flex: 1; display: flex; align-items: center; background: #3e3e40; margin-right: 6px; padding: 0 4px 0 5px; }
.hthumb { height: 12px; background: #686868; margin: 0 8px 0 auto; }
.hthumb.daily { width: 30px; }
.hthumb.weekly { width: 48px; }
.zoom button { width: 28px; height: 21px; background: linear-gradient(#4c4c4c, #5c5c5c); border: 1px solid #3a3a3a; border-radius: 2px; }
.zoom .focus { outline: 1px dotted #fff; outline-offset: -4px; }
</style>
